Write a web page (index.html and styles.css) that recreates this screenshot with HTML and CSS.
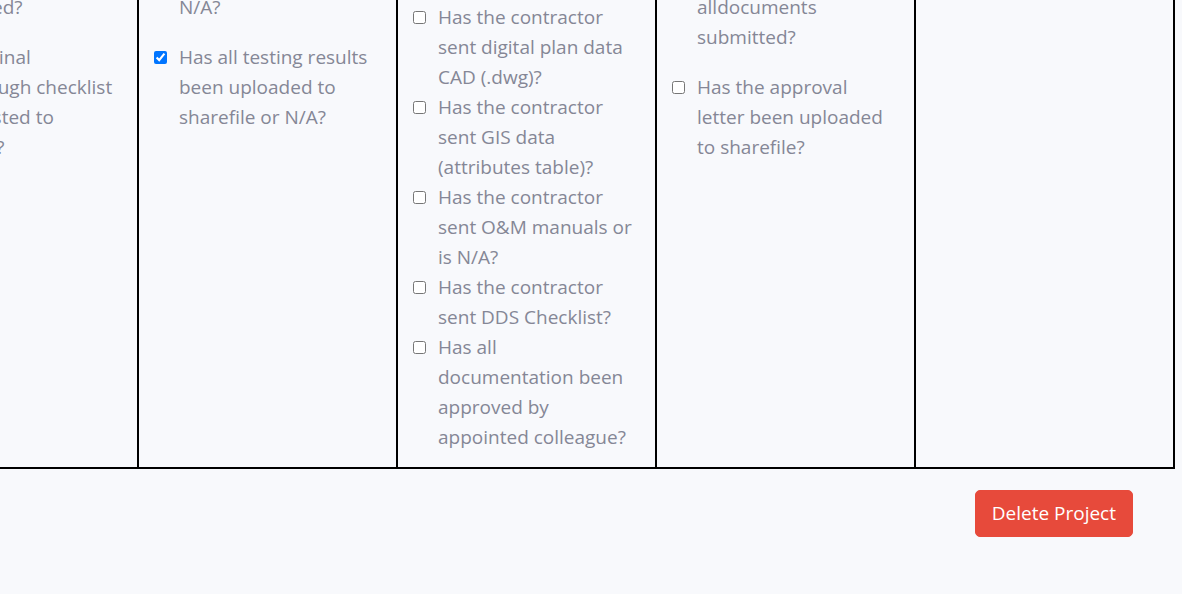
FILE: index.html
```html
<!DOCTYPE html>
<html lang="en">
<head>
<meta charset="utf-8">
<title>Project checklist</title>
<link rel="stylesheet" href="styles.css">
</head>
<body>
<div class="page">
  <div class="checklist">
    <div class="cell">
      <div class="list spaced">
        <label class="item"><input type="checkbox" checked><span>Has the site<br>been surveyed?</span></label>
        <label class="item"><input type="checkbox" checked><span>Has the site<br>inspection been<br>completed?</span></label>
        <label class="item"><input type="checkbox"><span>Has the final<br>walkthrough checklist<br>been posted to<br>sharefile?</span></label>
      </div>
    </div>
    <div class="cell">
      <div class="list spaced">
        <label class="item"><input type="checkbox" checked><span>Has the CCTV<br>survey been completed?</span></label>
        <label class="item"><input type="checkbox" checked><span>Has the CCTV report<br>been uploaded to sharefile or<br>N/A?</span></label>
        <label class="item"><input type="checkbox" checked><span>Has all testing results<br>been uploaded to<br>sharefile or N/A?</span></label>
      </div>
    </div>
    <div class="cell">
      <div class="list">
        <label class="item"><input type="checkbox"><span>Has the contractor<br>sent as-built drawings<br>(.pdf)?</span></label>
        <label class="item"><input type="checkbox"><span>Has the contractor<br>sent photos?</span></label>
        <label class="item"><input type="checkbox"><span>Has the contractor<br>sent digital plan data<br>CAD (.dwg)?</span></label>
        <label class="item"><input type="checkbox"><span>Has the contractor<br>sent GIS data<br>(attributes table)?</span></label>
        <label class="item"><input type="checkbox"><span>Has the contractor<br>sent O&amp;M manuals or<br>is N/A?</span></label>
        <label class="item"><input type="checkbox"><span>Has the contractor<br>sent DDS Checklist?</span></label>
        <label class="item"><input type="checkbox"><span>Has all<br>documentation been<br>approved by<br>appointed colleague?</span></label>
      </div>
    </div>
    <div class="cell">
      <div class="list spaced">
        <label class="item"><input type="checkbox"><span>Has the asset<br>been adopted?</span></label>
        <label class="item"><input type="checkbox"><span>Has the contractor<br>confirmed<br>alldocuments<br>submitted?</span></label>
        <label class="item"><input type="checkbox"><span>Has the approval<br>letter been uploaded<br>to sharefile?</span></label>
      </div>
    </div>
    <div class="cell"></div>
  </div>
  <div class="actions">
    <button class="btn-danger" type="button">Delete Project</button>
  </div>
</div>
</body>
</html>
```
FILE: styles.css
```css
html, body {
  margin: 0;
  padding: 0;
}

body {
  background: #f8f9fc;
  color: #858796;
  font-family: "Open Sans", "Noto Sans", sans-serif;
  font-size: 19px;
  line-height: 30px;
  overflow: hidden;
  height: 594px;
}

.page {
  margin: -165px 0 0 -122px;
  width: 1297px;
}

.checklist {
  display: grid;
  grid-template-columns: repeat(5, 257px);
  gap: 2px;
  background: #000;
  border: 2px solid #000;
}

.cell {
  background: #f8f9fc;
  padding: 15px;
}

.list {
  display: flex;
  flex-direction: column;
}

.list.spaced {
  gap: 20px;
}

.item {
  display: flex;
  align-items: flex-start;
}

.item span {
  white-space: nowrap;
}

.item input {
  flex: none;
  width: 13px;
  height: 13px;
  margin: 9px 12px 0 0;
}

.actions {
  display: flex;
  justify-content: flex-end;
  padding: 21px 42px 0 0;
}

.btn-danger {
  font-family: inherit;
  font-size: 19px;
  line-height: 29px;
  padding: 8px 16px;
  border: 1px solid #e74a3b;
  border-radius: 5px;
  background: #e74a3b;
  color: #fff;
  cursor: pointer;
}
```
